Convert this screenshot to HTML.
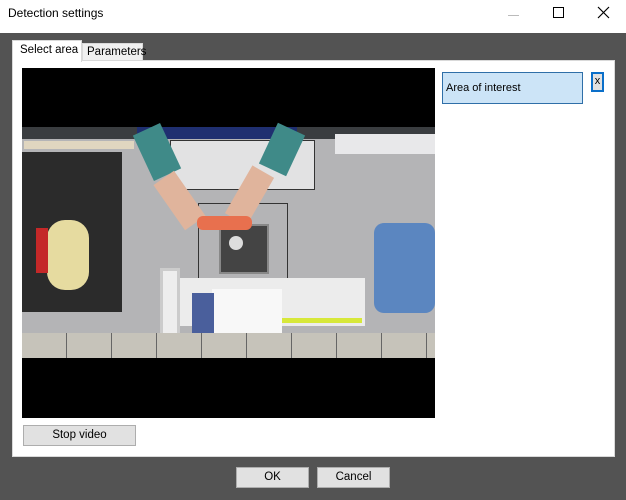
<!DOCTYPE html>
<html><head><meta charset="utf-8"><style>
*{margin:0;padding:0;box-sizing:border-box}
body{width:626px;height:500px;background:#535353;font-family:"Liberation Sans",sans-serif;font-size:11px;position:relative;overflow:hidden;color:#000}
.a{position:absolute}
.btn{position:absolute;background:#e1e1e1;border:1px solid #adadad;text-align:center;line-height:19px;font-size:11.5px}
</style></head><body>
<div class="a" style="left:0;top:0;width:626px;height:33px;background:#fff"></div>
<div class="a" style="left:8px;top:6px;font-size:12px">Detection settings</div>
<div class="a" style="left:508px;top:15px;width:11px;height:1px;background:#bbb"></div>
<div class="a" style="left:553px;top:7px;width:11px;height:11px;border:1px solid #000"></div>
<svg class="a" style="left:597px;top:6px" width="13" height="13"><path d="M1 1L12 12M12 1L1 12" stroke="#000" stroke-width="1.2"/></svg>

<div class="a" style="left:12px;top:60px;width:603px;height:397px;background:#fff;border:1px solid #d9d9d9"></div>
<div class="a" style="left:12px;top:40px;width:70px;height:22px;background:#fff;border:1px solid #d9d9d9;border-bottom:none;padding:3px 0 0 7px;font-size:11.5px">Select area</div>
<div class="a" style="left:82px;top:43px;width:61px;height:17px;background:#f0f0f0;border:1px solid #d9d9d9;border-bottom:none;padding:2px 0 0 4px;font-size:11.5px">Parameters</div>

<div class="a" style="left:22px;top:68px;width:413px;height:350px;background:#000;overflow:hidden">
 <div class="a" style="left:0;top:59px;width:413px;height:231px;background:#b4b4b6"></div>
 <div class="a" style="left:0;top:59px;width:413px;height:12px;background:#3a3d40"></div>
 <div class="a" style="left:115px;top:59px;width:160px;height:12px;background:#1f2f70"></div>
 <div class="a" style="left:313px;top:66px;width:100px;height:20px;background:#e8e8ea"></div>
 <div class="a" style="left:2px;top:73px;width:110px;height:8px;background:#e0d6c0"></div>
 <div class="a" style="left:0;top:84px;width:100px;height:160px;background:#2b2b2b"></div>
 <div class="a" style="left:148px;top:72px;width:145px;height:50px;background:#e2e2e3;border:1px solid #333"></div>
 <div class="a" style="left:176px;top:135px;width:90px;height:115px;border:1px solid #333"></div>
 <div class="a" style="left:197px;top:156px;width:50px;height:50px;background:#444;border:2px solid #888"></div>
 <div class="a" style="left:207px;top:168px;width:14px;height:14px;background:#ddd;border-radius:50%"></div>
 <div class="a" style="left:25px;top:152px;width:42px;height:70px;background:#e6dba0;border-radius:18px"></div>
 <div class="a" style="left:14px;top:160px;width:12px;height:45px;background:#c42828"></div>
 <div class="a" style="left:120px;top:59px;width:30px;height:50px;background:#3f8a88;transform:rotate(-25deg)"></div>
 <div class="a" style="left:245px;top:59px;width:30px;height:45px;background:#3f8a88;transform:rotate(25deg)"></div>
 <div class="a" style="left:145px;top:105px;width:25px;height:55px;background:#e0b49c;transform:rotate(-35deg)"></div>
 <div class="a" style="left:215px;top:100px;width:25px;height:55px;background:#e0b49c;transform:rotate(30deg)"></div>
 <div class="a" style="left:175px;top:148px;width:55px;height:14px;background:#e8704e;border-radius:6px"></div>
 <div class="a" style="left:352px;top:155px;width:61px;height:90px;background:#5b86c0;border-radius:10px"></div>
 <div class="a" style="left:145px;top:210px;width:198px;height:48px;background:#ececec"></div>
 <div class="a" style="left:190px;top:221px;width:70px;height:46px;background:#f8f8f8"></div>
 <div class="a" style="left:260px;top:250px;width:80px;height:5px;background:#d7e83a"></div>
 <div class="a" style="left:170px;top:225px;width:22px;height:40px;background:#4a5f9c"></div>
 <div class="a" style="left:138px;top:200px;width:20px;height:85px;background:#eee;border:3px solid #ccc"></div>
 <div class="a" style="left:0;top:265px;width:413px;height:25px;background:#c6c3ba;background-image:repeating-linear-gradient(90deg,transparent 0 44px,#666 44px 45px)"></div>
</div>

<div class="a" style="left:442px;top:72px;width:141px;height:32px;background:#cce4f7;border:1px solid #2f6fa8;padding:9px 0 0 3px">Area of interest</div>
<div class="a" style="left:591px;top:72px;width:13px;height:20px;background:#e1e1e1;border:2px solid #0b6fc9;text-align:center;line-height:15px;font-size:11px">x</div>

<div class="btn" style="left:23px;top:425px;width:113px;height:21px">Stop video</div>
<div class="btn" style="left:236px;top:467px;width:73px;height:21px">OK</div>
<div class="btn" style="left:317px;top:467px;width:73px;height:21px">Cancel</div>
</body></html>
